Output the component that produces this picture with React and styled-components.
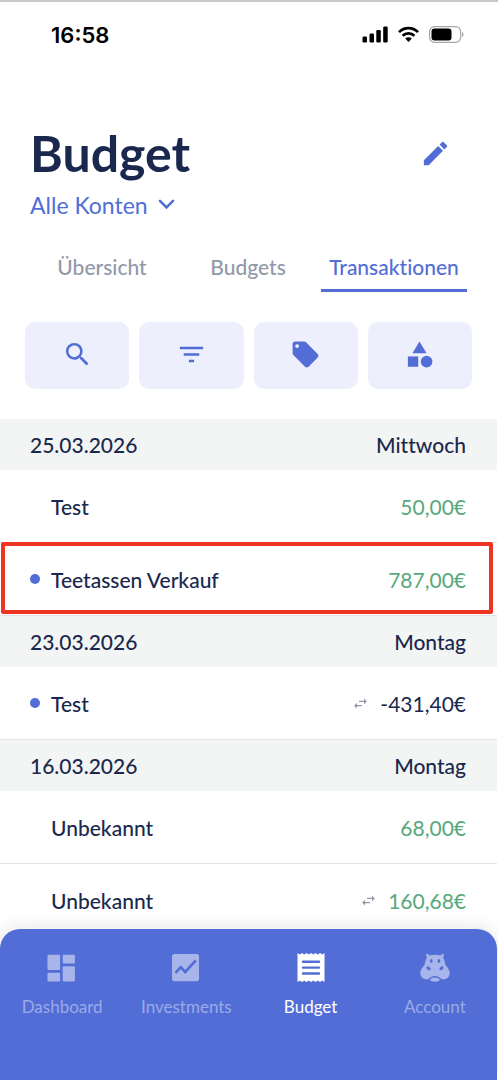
import { useState } from 'react';
import styled, { createGlobalStyle } from 'styled-components';
import { MdEdit, MdSearch, MdFilterList, MdLocalOffer, MdCategory, MdSwapHoriz } from 'react-icons/md';

const GlobalStyle = createGlobalStyle`
	* {
		box-sizing: border-box;
	}

	body {
		margin: 0;
		background: #fff;
		color: #1a284d;
		font-family: Lato, 'Open Sans', sans-serif;
		font-variant-ligatures: none;
	}

	button,
	select {
		padding: 0;
		border: 0;
		background: none;
		color: inherit;
		font: inherit;
		font-variant-ligatures: none;
		cursor: pointer;
	}
`;

const Page = styled.div`
	display: flex;
	flex-direction: column;
	height: 100vh;
	padding-right: 1px;
	border-top: 2px solid #c8c8c8;
`;

const StatusBar = styled.div`
	display: flex;
	align-items: center;
	justify-content: space-between;
	height: 65px;
	padding: 0 33px 0 51px;
	color: #000;
	font: 600 22px/28px Inter, sans-serif;
`;

const StatusIcons = styled.div`
	display: flex;
	align-items: center;
	gap: 10px;
`;

const Header = styled.header`
	display: flex;
	align-items: center;
	justify-content: space-between;
	padding: 54px 46px 0 30px;
`;

const Title = styled.h1`
	margin: 0;
	font-size: 50px;
	font-weight: 700;
	line-height: 64px;
`;

const IconButton = styled.button`
	display: flex;
	color: #526ed6;
`;

const AccountPicker = styled.label`
	display: flex;
	align-items: center;
	align-self: flex-start;
	gap: 10px;
	margin: 6px 0 0 30px;
	color: #526ed6;

	& select {
		appearance: none;
		field-sizing: content;
		font-size: 23px;
		line-height: 28px;
	}
`;

const Tabs = styled.div`
	display: grid;
	grid-template-columns: repeat(3, 1fr);
	margin: 25px 30px 0 29px;
`;

const Tab = styled.button`
	height: 48px;
	padding-bottom: 1px;
	border-bottom: 3px solid ${({ $active }) => ($active ? '#526ed6' : 'transparent')};
	color: ${({ $active }) => ($active ? '#526ed6' : '#9298a8')};
	font-size: 21px;
	font-weight: 500;
`;

const Actions = styled.div`
	display: grid;
	grid-template-columns: repeat(4, 1fr);
	gap: 10px;
	margin: 30px 25px;
`;

const ActionButton = styled.button`
	display: flex;
	align-items: center;
	justify-content: center;
	height: 67px;
	padding-bottom: 3px;
	border-radius: 10px;
	background: #eeeffc;
	color: #526ed6;
`;

const List = styled.main`
	flex: 1;
	min-height: 0;
	overflow-y: auto;
	scrollbar-width: none;
	font-size: 21px;
	font-weight: 500;
`;

const DayHeader = styled.h2`
	display: flex;
	align-items: center;
	justify-content: space-between;
	height: 51px;
	margin: 0;
	padding: 0 31px 0 30px;
	background: #f3f5f4;
	font-size: 21px;
	font-weight: 500;
`;

const Row = styled.div`
	position: relative;
	display: flex;
	align-items: center;
	height: 73px;
	padding: 0 31px 0 30px;
	border-bottom: 1px solid #e4e5e8;
`;

const Highlight = styled.div`
	position: absolute;
	inset: -1px 4px 1px 1px;
	border: 4px solid #ee3524;
	border-radius: 2px;
`;

const Dot = styled.span`
	width: 10px;
	height: 10px;
	margin-right: 11px;
	border-radius: 50%;
	background: ${({ $visible }) => ($visible ? '#526ed6' : 'transparent')};
`;

const Amount = styled.span`
	display: flex;
	align-items: center;
	gap: 11px;
	margin-left: auto;
	color: ${({ $income }) => ($income ? '#57a87a' : 'inherit')};
	font-weight: 400;

	& svg {
		color: #9298a8;
	}
`;

const NavBar = styled.nav`
	position: relative;
	display: grid;
	grid-template-columns: repeat(4, 1fr);
	height: 151px;
	border-radius: 20px 20px 0 0;
	background: #526ed6;
	box-shadow: 0 0 20px rgba(0, 0, 0, 0.12);
`;

const NavLink = styled.a`
	display: flex;
	flex-direction: column;
	align-items: center;
	gap: 12px;
	padding-top: 24px;
	color: ${({ $active }) => ($active ? '#fff' : '#a8b5ea')};
	font-size: 17px;
	line-height: 24px;
	text-decoration: none;

	& span {
		opacity: ${({ $active }) => ($active ? 1 : 0.85)};
	}
`;

const SignalIcon = () => (
	<svg width="26" height="17" viewBox="0 0 26 17">
		<rect x="0.5" y="10.500" width="4.500" height="6" rx="1.300" />
		<rect x="7.500" y="7.500" width="4.500" height="9" rx="1.300" />
		<rect x="14.300" y="4" width="4.500" height="12.500" rx="1.300" />
		<rect x="21.200" y="0.500" width="4.500" height="16" rx="1.300" />
	</svg>
);

const WifiIcon = () => (
	<svg width="21" height="17" viewBox="0 0 21 17" fill="none" stroke="#000" strokeWidth="2.7">
		<path d="M1 6.1C6.4.7 14.6.7 20 6.1" />
		<path d="M4.6 9.8C8 6.5 13 6.5 16.4 9.8" />
		<path d="M7.2 12.6c1.8-1.7 4.8-1.7 6.6 0L10.5 16z" fill="#000" stroke="none" />
	</svg>
);

const BatteryIcon = () => (
	<svg width="35" height="17" viewBox="0 0 35 17">
		<rect x="0.6" y="0.6" width="31" height="15.8" rx="5" fill="none" stroke="#a6a6a6" strokeWidth="1.2" />
		<rect x="2.5" y="2.5" width="20" height="12" rx="3" />
		<path d="M33 6v5c2-.8 2-4.200 0-5z" fill="#a6a6a6" />
	</svg>
);

const ChevronIcon = () => (
	<svg width="17" height="12" viewBox="0 0 17 12" fill="none" stroke="currentColor" strokeWidth="2.600">
		<path d="M2 1.800l6.500 6.500L15 1.800" strokeLinecap="round" />
	</svg>
);

const DashboardIcon = () => (
	<svg width="30" height="30" viewBox="0 0 30 30" fill="currentColor">
		<rect x="0.500" y="1.700" width="12.600" height="15.300" rx="1" />
		<rect x="0.500" y="19.700" width="12.600" height="8.900" rx="1" />
		<rect x="15.700" y="1.700" width="12.200" height="8.900" rx="1" />
		<rect x="15.700" y="13.300" width="12.200" height="15.300" rx="1" />
	</svg>
);

const InvestmentsIcon = () => (
	<svg width="30" height="30" viewBox="0 0 30 30">
		<rect x="1" y="0.900" width="27" height="27.300" rx="2.500" fill="currentColor" />
		<path d="M4.500 19.800l5.200-5.600 4.500 4.800L24.900 7.400" fill="none" stroke="#526ed6" strokeWidth="2.700" />
	</svg>
);

const BudgetIcon = () => (
	<svg width="30" height="30" viewBox="0 0 30 30">
		<path
			d="M1.500 0l2.250 1.500L6 0l2.250 1.500L10.500 0l2.250 1.500L15 0l2.250 1.500L19.500 0l2.250 1.500L24 0l2.250 1.500L28.500 0v29l-2.250-1.500L24 29l-2.250-1.500L19.500 29l-2.250-1.500L15 29l-2.250-1.500L10.500 29l-2.250-1.500L6 29l-2.250-1.500L1.500 29z"
			fill="currentColor"
		/>
		<path d="M7 8.700h16M7 14.600h16M7 20.500h16" stroke="#526ed6" strokeWidth="2.400" strokeLinecap="round" />
	</svg>
);

const HippoIcon = () => (
	<svg width="30" height="30" viewBox="0 0 30 30">
		<path
			d="M6.100 2.200C6 .4 8.200.2 8.800 1.900l.3.500c3.600-.9 8.200-.9 11.800 0l.3-.5c.6-1.700 2.800-1.500 2.700.3-.1.900-.4 1.700-.9 2.400 1.200 2 1.700 4 2.300 6.700.5 2.300 4.400 4.200 4.400 8.900 0 3.900-3.200 6.200-6.600 6-2.500-.1-4.100-3.300-8.100-3.300s-5.600 3.200-8.100 3.300c-3.400.2-6.600-2.100-6.600-6 0-4.700 3.900-6.600 4.400-8.900.6-2.700 1.100-4.700 2.300-6.700-.5-.7-.8-1.500-.9-2.400z"
			fill="currentColor"
		/>
		<path d="M10.200 26.800c1.200-3 8.400-3 9.600 0 .4 1-1.700 1.900-4.800 1.900s-5.200-.9-4.800-1.900z" fill="currentColor" />
		<g fill="#526ed6">
			<ellipse cx="11.300" cy="7.900" rx="1.400" ry="1.900" />
			<ellipse cx="18.900" cy="7.900" rx="1.400" ry="1.900" />
			<ellipse cx="8.500" cy="15.200" rx="2.300" ry="1.600" transform="rotate(40 8.500 15.200)" />
			<ellipse cx="21.500" cy="15.200" rx="2.300" ry="1.600" transform="rotate(-40 21.500 15.200)" />
		</g>
	</svg>
);

const tabs = ['Übersicht', 'Budgets', 'Transaktionen'];

const actions = [
	{ label: 'Suchen', Icon: MdSearch },
	{ label: 'Filtern', Icon: MdFilterList },
	{ label: 'Tags', Icon: MdLocalOffer },
	{ label: 'Kategorien', Icon: MdCategory },
];

const days = [
	{
		date: '25.03.2026',
		weekday: 'Mittwoch',
		items: [
			{ id: 1, name: 'Test', amount: '50,00€' },
			{ id: 2, name: 'Teetassen Verkauf', amount: '787,00€', unread: true, highlighted: true },
		],
	},
	{
		date: '23.03.2026',
		weekday: 'Montag',
		items: [{ id: 3, name: 'Test', amount: '-431,40€', unread: true, transfer: true }],
	},
	{
		date: '16.03.2026',
		weekday: 'Montag',
		items: [
			{ id: 4, name: 'Unbekannt', amount: '68,00€' },
			{ id: 5, name: 'Unbekannt', amount: '160,68€', transfer: true },
		],
	},
];

const navItems = [
	{ label: 'Dashboard', Icon: DashboardIcon },
	{ label: 'Investments', Icon: InvestmentsIcon },
	{ label: 'Budget', Icon: BudgetIcon },
	{ label: 'Account', Icon: HippoIcon },
];

const Transaction = ({ name, amount, unread, transfer, highlighted }) => (
	<Row>
		<Dot $visible={unread} />
		<span>{name}</span>
		<Amount $income={!amount.startsWith('-')}>
			{transfer && <MdSwapHoriz size={17} />}
			{amount}
		</Amount>
		{highlighted && <Highlight />}
	</Row>
);

const App = () => {
	const [activeTab, setActiveTab] = useState('Transaktionen');

	return (
		<Page>
			<GlobalStyle />
			<StatusBar>
				<span>16:58</span>
				<StatusIcons>
					<SignalIcon />
					<WifiIcon />
					<BatteryIcon />
				</StatusIcons>
			</StatusBar>

			<Header>
				<Title>Budget</Title>
				<IconButton aria-label="Bearbeiten">
					<MdEdit size={31} />
				</IconButton>
			</Header>
			<AccountPicker>
				<select aria-label="Konto">
					<option>Alle Konten</option>
				</select>
				<ChevronIcon />
			</AccountPicker>

			<Tabs role="tablist">
				{tabs.map((tab) => (
					<Tab
						key={tab}
						role="tab"
						aria-selected={tab === activeTab}
						$active={tab === activeTab}
						onClick={() => setActiveTab(tab)}
					>
						{tab}
					</Tab>
				))}
			</Tabs>

			<Actions>
				{actions.map(({ label, Icon }) => (
					<ActionButton key={label} aria-label={label}>
						<Icon size={31} />
					</ActionButton>
				))}
			</Actions>

			<List>
				{days.map(({ date, weekday, items }) => (
					<section key={date}>
						<DayHeader>
							<span>{date}</span>
							<span>{weekday}</span>
						</DayHeader>
						{items.map((item) => (
							<Transaction key={item.id} {...item} />
						))}
					</section>
				))}
			</List>

			<NavBar>
				{navItems.map(({ label, Icon }) => (
					<NavLink key={label} href="#" $active={label === 'Budget'}>
						<Icon />
						<span>{label}</span>
					</NavLink>
				))}
			</NavBar>
		</Page>
	);
};

export default App;
